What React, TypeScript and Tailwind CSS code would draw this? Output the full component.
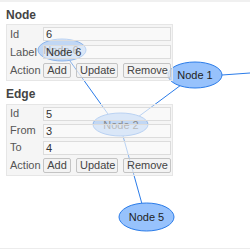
import React from 'react';

type Row = { label: string; value?: string };

function Field({ label, value, h }: Row & { h: string }) {
  return (
    <div className={`flex items-center ${h}`}>
      <span className="w-[36px] pl-[3px] text-[11px] text-[#555]">{label}</span>
      <div className="w-[128px] h-[14px] border border-[#dcdcdc] bg-white/40 pl-[2px] text-[11px] leading-[12px] text-[#333]">
        {value}
      </div>
    </div>
  );
}

function Actions({ h }: { h: string }) {
  const btn =
    'h-[15px] px-[3px] border border-[#c4c4c4] rounded-[2px] bg-[#f2f2f2]/60 text-[11px] leading-[12px] text-[#444]';
  return (
    <div className={`flex items-center ${h}`}>
      <span className="w-[36px] pl-[3px] text-[11px] text-[#555]">Action</span>
      <div className="flex gap-[5px]">
        <button type="button" className={`${btn} w-[28px]`}>Add</button>
        <button type="button" className={`${btn} w-[42px]`}>Update</button>
        <button type="button" className={`${btn} w-[48px]`}>Remove</button>
      </div>
    </div>
  );
}

function Section({ title, rows, rowH, gap }: { title: string; rows: Row[]; rowH: string; gap: string }) {
  return (
    <div>
      <h2 className="h-[14px] text-[12px] leading-[14px] font-bold text-[#444]">{title}</h2>
      <div className={`${gap} w-[167px] border border-[#e6e6e6] bg-[#ebebeb]/50 pb-[1px]`}>
        {rows.map((r) => (
          <Field key={r.label} {...r} h={rowH} />
        ))}
        <Actions h="h-[18px]" />
      </div>
    </div>
  );
}

function Graph() {
  const fill = '#97C2FC';
  const stroke = '#2B7CE9';
  return (
    <svg className="absolute inset-0" width="250" height="250" viewBox="0 0 250 250">
      <g stroke={stroke} strokeWidth="1">
        <line x1="70" y1="61" x2="108" y2="114" />
        <line x1="181" y1="85" x2="138" y2="117" />
        <line x1="123" y1="136" x2="142" y2="204" />
        <line x1="222" y1="75" x2="250" y2="73" />
      </g>
      <g fontFamily="'Liberation Sans', Arial, sans-serif" fontSize="11" textAnchor="middle" fill="#222">
        <ellipse cx="62" cy="50" rx="24" ry="11" fill={fill} stroke={stroke} />
        <text x="61" y="54">Node 6</text>
        <ellipse cx="195" cy="75" rx="27" ry="13" fill={fill} stroke={stroke} />
        <text x="195" y="79">Node 1</text>
        <ellipse cx="120.5" cy="124.5" rx="27.5" ry="11.5" fill={fill} stroke={stroke} />
        <text x="121" y="128.5">Node 2</text>
        <ellipse cx="146.5" cy="217" rx="27.5" ry="14" fill={fill} stroke={stroke} />
        <text x="146.5" y="221">Node 5</text>
      </g>
    </svg>
  );
}

export default function App() {
  return (
    <div className="relative w-[250px] h-[250px] bg-white overflow-hidden font-['Liberation_Sans',Arial,sans-serif]">
      <Graph />
      <div className="relative h-[2px] bg-[#f0f0f0]" />
      <div className="relative pt-[6px] px-[6px] flex flex-col gap-[6px]">
        <Section
          title="Node"
          rowH="h-[18px]"
          gap="mt-[2px]"
          rows={[{ label: 'Id', value: '6' }, { label: 'Label', value: 'Node 6' }]}
        />
        <Section
          title="Edge"
          rowH="h-[17px]"
          gap="mt-[3px]"
          rows={[
            { label: 'Id', value: '5' },
            { label: 'From', value: '3' },
            { label: 'To', value: '4' },
          ]}
        />
      </div>
      <div className="absolute left-0 right-0 bottom-[1px] h-px bg-[#ececec]" />
    </div>
  );
}
